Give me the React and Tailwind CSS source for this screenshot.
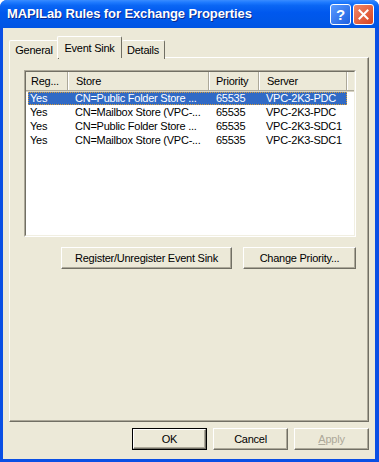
import React from 'react';

const rows = [
    { reg: 'Yes', store: 'CN=Public Folder Store ...', priority: '65535', server: 'VPC-2K3-PDC', selected: true },
    { reg: 'Yes', store: 'CN=Mailbox Store (VPC-...', priority: '65535', server: 'VPC-2K3-PDC' },
    { reg: 'Yes', store: 'CN=Public Folder Store ...', priority: '65535', server: 'VPC-2K3-SDC1' },
    { reg: 'Yes', store: 'CN=Mailbox Store (VPC-...', priority: '65535', server: 'VPC-2K3-SDC1' },
];

const cols = [
    { label: 'Reg...', w: 'w-[42px]', pad: 'pl-[5px]' },
    { label: 'Store', w: 'w-[141px]', pad: 'pl-[7px]' },
    { label: 'Priority', w: 'w-[50px]', pad: 'pl-[6px]' },
    { label: 'Server', w: 'w-[88px]', pad: 'pl-[7px]' },
];

function Button({ children, className = '', isDefault, disabled }) {
    return (
        <div className={`h-[22px] ${isDefault ? 'border border-black' : ''} ${className}`}>
            <div className="h-full w-full bg-[#ece9d8] border-t border-l border-white border-b border-r border-b-[#716f64] border-r-[#716f64] shadow-[inset_-1px_-1px_0_#aca899] flex items-center justify-center">
                <span className={disabled ? 'text-[#aca899]' : 'text-black'}>{children}</span>
            </div>
        </div>
    );
}

export default function App() {
    return (
        <div className="w-[379px] h-[462px] bg-[#0a4fe4] rounded-t-[7px] overflow-hidden flex flex-col text-[11px] tracking-[-0.25px] text-black"
            style={{ fontFamily: '"Liberation Sans", Arial, sans-serif' }}>
            {/* Title bar */}
            <div className="h-[28px] flex items-center pl-[7px] pr-[5px] bg-[linear-gradient(180deg,#3a8cff_0%,#1f7bff_8%,#0a66f4_20%,#0058ee_45%,#0057e8_75%,#0054e3_100%)]">
                <span className="text-white font-bold text-[13px] tracking-[-0.1px] [text-shadow:1px_1px_0_#0a2a8c]">
                    MAPILab Rules for Exchange Properties
                </span>
                <div className="ml-auto flex gap-[2px]">
                    <div className="w-[21px] h-[21px] rounded-[3px] border border-white bg-[linear-gradient(135deg,#5a9bff,#1d5fe0)] flex items-center justify-center text-white font-bold text-[15px] leading-none">?</div>
                    <div className="w-[21px] h-[21px] rounded-[3px] border border-white bg-[linear-gradient(135deg,#f0886a,#d8431f)] flex items-center justify-center">
                        <svg width="11" height="11" viewBox="0 0 11 11">
                            <path d="M1.5 1.5 L9.5 9.5 M9.5 1.5 L1.5 9.5" stroke="white" strokeWidth="2" strokeLinecap="square" />
                        </svg>
                    </div>
                </div>
            </div>

            {/* Body */}
            <div className="flex-1 ml-[3px] mr-[4px] mb-[3px] bg-[#ece9d8] flex flex-col px-[6px] pt-[8px]">
                {/* Tabs */}
                <div className="flex items-end h-[22px] relative z-10">
                    <div className="w-[50px] h-[19px] mb-[-1px] border-t border-l border-white border-r border-r-[#716f64] rounded-t-[2px] flex items-center justify-center bg-[#ece9d8]">General</div>
                    <div className="w-[65px] h-[22px] ml-[-2px] border-t border-l border-white border-r border-r-[#716f64] rounded-t-[2px] flex items-start pt-[3px] justify-center bg-[#ece9d8]">Event Sink</div>
                    <div className="w-[43px] h-[19px] mb-[-1px] border-t border-white border-r border-r-[#716f64] rounded-t-[2px] flex items-center justify-center bg-[#ece9d8]">Details</div>
                </div>
                {/* Panel */}
                <div className="h-[365px] -mt-px border-t border-l border-white border-b border-r border-b-[#716f64] border-r-[#716f64] shadow-[inset_-1px_-1px_0_#aca899] flex flex-col pl-[14px] pr-[12px] pt-[12px]">
                    {/* ListView */}
                    <div className="h-[167px] border border-t-[#aca899] border-l-[#aca899] border-b-white border-r-white">
                        <div className="h-full bg-white border border-t-[#716f64] border-l-[#716f64] border-b-[#f1efe2] border-r-[#f1efe2] flex flex-col">
                            <div className="flex h-[19px] bg-[#ece9d8] border-b border-b-[#aca899] shadow-[0_1px_0_#d6d2c2]">
                                {cols.map((c, i) => (
                                    <div key={c.label} className={`${c.w} ${c.pad} h-full flex items-center border-r border-r-[#aca899] ${i > 0 ? 'border-l border-l-white' : ''}`}>
                                        {c.label}
                                    </div>
                                ))}
                                <div className="flex-1 border-l border-l-white" />
                            </div>
                            <div className="pt-[1px]">
                                {rows.map((r, i) => (
                                    <div key={i} className="h-[14px] flex">
                                        <div className={`flex ml-[2px] h-[13px] items-center ${r.selected ? 'bg-[#316ac5] text-white outline-1 outline-dotted outline-[#d69b39] -outline-offset-1' : ''}`}>
                                            <div className="w-[40px] pl-[2px]">{r.reg}</div>
                                            <div className="w-[141px] pl-[7px] whitespace-nowrap">{r.store}</div>
                                            <div className="w-[50px] pl-[7px]">{r.priority}</div>
                                            <div className="w-[88px] pl-[7px] whitespace-nowrap">{r.server}</div>
                                        </div>
                                    </div>
                                ))}
                            </div>
                        </div>
                    </div>
                    {/* Actions */}
                    <div className="flex justify-end gap-[11px] mt-[10px]">
                        <Button className="w-[171px]">Register/Unregister Event Sink</Button>
                        <Button className="w-[113px]">Change Priority...</Button>
                    </div>
                </div>
                {/* Footer */}
                <div className="flex justify-end gap-[6px] mt-[6px]">
                    <Button className="w-[75px]" isDefault>OK</Button>
                    <Button className="w-[75px]">Cancel</Button>
                    <Button className="w-[75px]" disabled><span className="underline">A</span>pply</Button>
                </div>
            </div>
        </div>
    );
}
